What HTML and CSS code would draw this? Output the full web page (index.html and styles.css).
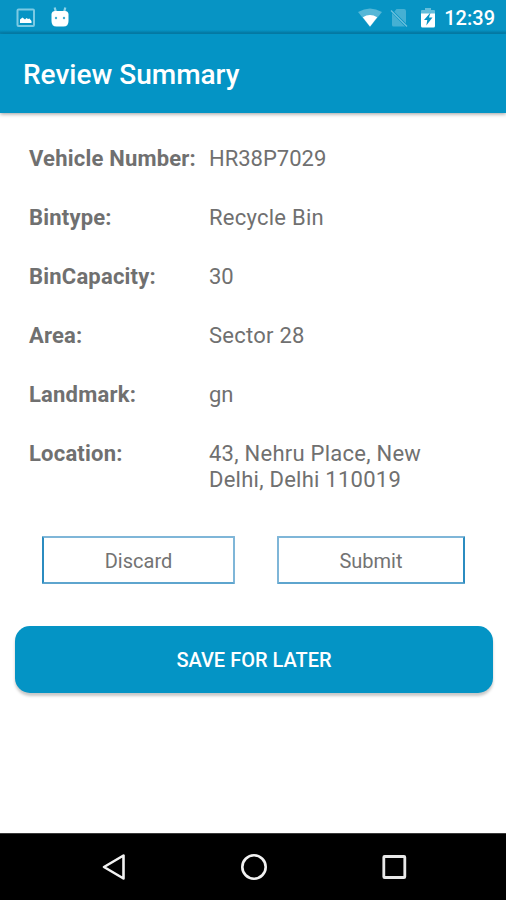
FILE: index.html
```html
<!DOCTYPE html>
<html lang="en">
<head>
<meta charset="utf-8">
<title>Review Summary</title>
<link rel="stylesheet" href="styles.css">
</head>
<body>
<div class="screen">
  <div class="status">
    <svg class="icon-picture" width="20" height="20" viewBox="0 0 20 20">
      <rect x="1.500" y="1.500" width="16.500" height="16.500" rx="1" fill="none" stroke="#7ccae3" stroke-width="2"/>
      <path d="M4 15v-3.500l2.500-2 2.500 2 1.500-1.500 1.500 1 1.500-.5 2 2.500V15z" fill="#fff"/>
    </svg>
    <svg class="icon-droid" width="18" height="22" viewBox="0 0 18 22">
      <path d="M3.700 1.500l1.300 5M14.300 1.500l-1.300 5" stroke="#8ed3e9" stroke-width="2.200" fill="none"/>
      <path d="M.5 8Q1 5 4 5h10q3 0 3.500 3v7q0 5.500-5 5.500H5.500q-5 0-5-5.500z" fill="#fff"/>
      <circle cx="5" cy="12" r="1.200" fill="#3faed2"/><circle cx="13" cy="12" r="1.200" fill="#3faed2"/>
    </svg>
    <svg class="icon-wifi" width="24" height="20" viewBox="0 0 24 20">
      <path d="M0 4Q12-3 24 4L12 19z" fill="#55b7d7"/>
      <path d="M4.800 9.300q7.200-4.500 14.400 0L12 18.500z" fill="#fff"/>
    </svg>
    <svg class="icon-sim" width="18" height="20" viewBox="0 0 18 20">
      <path d="M6.500 1H14q2 0 2 2v12.500L4.300 3.800zM2 5l13 13.500H3.500Q2 18.500 2 17z" fill="#45b0d3"/>
      <path d="M1 2.500l16 16" stroke="#6fc2dd" stroke-width="1.300"/>
    </svg>
    <svg class="icon-battery" width="14" height="20" viewBox="0 0 14 20">
      <path d="M0 6V3q0-1 1-1h3V0h6v2h3q1 0 1 1v3z" fill="#65bedb"/>
      <path d="M0 5.500h14V18q0 1.500-1.500 1.500h-11Q0 19.500 0 18z" fill="#fff"/>
      <path d="M9.500 4.500L3 12h3.300l-1 5.500L11.500 9.500H8z" fill="#0794c4"/>
    </svg>
    <span class="clock">12:39</span>
  </div>
  <header class="appbar"><h1>Review Summary</h1></header>
  <main>
    <dl class="details">
      <dt>Vehicle Number:</dt><dd class="plate">HR38P7029</dd>
      <dt>Bintype:</dt><dd>Recycle Bin</dd>
      <dt>BinCapacity:</dt><dd class="plate">30</dd>
      <dt>Area:</dt><dd>Sector 28</dd>
      <dt>Landmark:</dt><dd class="plate">gn</dd>
      <dt>Location:</dt><dd>43, Nehru Place, New Delhi, Delhi 110019</dd>
    </dl>
    <div class="actions">
      <button class="outline discard">Discard</button>
      <button class="outline submit">Submit</button>
    </div>
    <button class="save">SAVE FOR LATER</button>
  </main>
  <nav class="navbar">
    <svg width="26" height="30" viewBox="0 0 26 30"><path d="M3 15L22.500 3.500v23z" fill="none" stroke="#f2f2f2" stroke-width="2.600" stroke-linejoin="round"/></svg>
    <svg width="28" height="28" viewBox="0 0 28 28"><circle cx="14" cy="14" r="11.700" fill="none" stroke="#f2f2f2" stroke-width="2.600"/></svg>
    <svg width="26" height="26" viewBox="0 0 26 26"><rect x="2.800" y="2.500" width="21" height="21" rx=".8" fill="none" stroke="#e8e8e8" stroke-width="2.800"/></svg>
  </nav>
</div>
</body>
</html>
```

FILE: styles.css
```css
* { box-sizing: border-box; }
body { margin: 0; background: #fff; font-family: Roboto, "Liberation Sans", sans-serif; }
.screen { width: 506px; height: 900px; display: flex; flex-direction: column; }
svg { display: block; flex: none; }
button { font-family: inherit; padding: 0; }

.status {
  height: 34px;
  display: flex;
  align-items: center;
  padding: 1px 11px 0 16px;
  color: #fff;
  background: linear-gradient(#0794c4 30px, #0585b3 32px, #057fab 33px, #058cbb 34px);
}
.icon-droid { margin: 0 auto 2px 15px; }
.icon-wifi { margin-right: 8px; }
.icon-sim { margin-right: 13px; }
.icon-battery { margin-right: 9px; }
.clock { font-size: 20px; font-weight: 500; line-height: 24px; }

.appbar {
  height: 79px;
  display: flex;
  align-items: center;
  padding: 2px 23px 0;
  color: #fff;
  background: #0494c5;
  box-shadow: 0 1px 4px rgba(0, 0, 0, .4);
}
.appbar h1 { margin: 0; font-size: 28px; line-height: 34px; font-weight: 500; }

main { flex: 1; padding: 33px 13px 0 15px; }
.details {
  display: grid;
  grid-template-columns: 180px 240px;
  row-gap: 33px;
  margin: 0 0 43px 14px;
  font-size: 22px;
  line-height: 26px;
  color: #707070;
}
dt { font-weight: 700; letter-spacing: .2px; white-space: nowrap; }
dd { margin: 0; letter-spacing: .25px; }
.plate { letter-spacing: 0; }

.actions {
  display: grid;
  grid-template-columns: 193px 188px;
  column-gap: 42px;
  margin: 0 0 42px 27px;
}
.outline {
  height: 48px;
  border: 2px solid #7fb6d8;
  border-bottom-color: #5ea5ce;
  border-radius: 1px;
  background: #fff;
  color: #737373;
  font-size: 20px;
  padding-top: 2px;
}
.discard { border-left-color: #2b8cc0; }
.submit { border-right-color: #2b8cc0; }
.save {
  display: block;
  width: 100%;
  height: 67px;
  border: 0;
  border-radius: 15px;
  background: #0494c5;
  box-shadow: 0 3px 3px rgba(0, 0, 0, .22);
  color: #fff;
  font-size: 20px;
  font-weight: 500;
}

.navbar {
  height: 67px;
  display: flex;
  align-items: center;
  justify-content: space-between;
  padding: 0 99px 0 101px;
  border-top: 1px solid #3a3a3a;
  background: #000;
}
```
